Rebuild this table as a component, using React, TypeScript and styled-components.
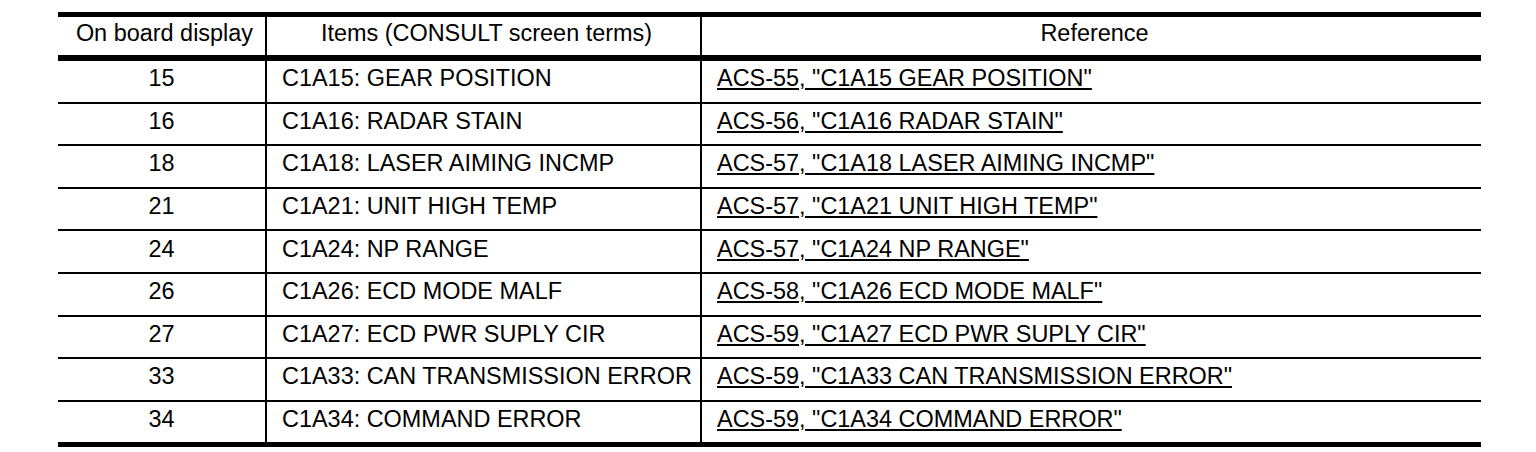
import React from 'react';
import styled, { createGlobalStyle } from 'styled-components';

const rows = [
  { code: '15', item: 'C1A15: GEAR POSITION', ref: 'ACS-55, "C1A15 GEAR POSITION"' },
  { code: '16', item: 'C1A16: RADAR STAIN', ref: 'ACS-56, "C1A16 RADAR STAIN"' },
  { code: '18', item: 'C1A18: LASER AIMING INCMP', ref: 'ACS-57, "C1A18 LASER AIMING INCMP"' },
  { code: '21', item: 'C1A21: UNIT HIGH TEMP', ref: 'ACS-57, "C1A21 UNIT HIGH TEMP"' },
  { code: '24', item: 'C1A24: NP RANGE', ref: 'ACS-57, "C1A24 NP RANGE"' },
  { code: '26', item: 'C1A26: ECD MODE MALF', ref: 'ACS-58, "C1A26 ECD MODE MALF"' },
  { code: '27', item: 'C1A27: ECD PWR SUPLY CIR', ref: 'ACS-59, "C1A27 ECD PWR SUPLY CIR"' },
  { code: '33', item: 'C1A33: CAN TRANSMISSION ERROR', ref: 'ACS-59, "C1A33 CAN TRANSMISSION ERROR"' },
  { code: '34', item: 'C1A34: COMMAND ERROR', ref: 'ACS-59, "C1A34 COMMAND ERROR"' },
];

const GlobalStyle = createGlobalStyle`
  html, body {
    margin: 0;
    padding: 0;
    background: #fff;
  }
  body {
    font-family: "Liberation Sans", Arial, sans-serif;
    color: #000;
  }
`;

export default function App() {
  return (
    <>
      <GlobalStyle />
      <Table>
        <HeaderRow>
          <Cell $align="center" $head>On board display</Cell>
          <Cell $align="center" $head>Items (CONSULT screen terms)</Cell>
          <Cell $align="center" $head>Reference</Cell>
        </HeaderRow>
        {rows.map((r) => (
          <Row key={r.code}>
            <Cell $align="center">{r.code}</Cell>
            <Cell>{r.item}</Cell>
            <Cell>
              <RefLink>{r.ref}</RefLink>
            </Cell>
          </Row>
        ))}
      </Table>
    </>
  );
}

const Table = styled.div`
  width: 1423px;
  margin: 12px 0 0 58px;
  border-top: 5px solid #000;
  border-bottom: 5px solid #000;
  font-size: 23.45px;
`;

const Row = styled.div`
  display: grid;
  grid-template-columns: 209px 435px 1fr;
  height: 40.6px;

  & + & {
    border-top: 2px solid #000;
  }
`;

const HeaderRow = styled(Row)`
  height: 38px;
  border-bottom: 4px solid #000;
`;

const Cell = styled.div<{ $align?: 'center' | 'left'; $head?: boolean }>`
  display: flex;
  align-items: center;
  justify-content: ${(p) => (p.$align === 'center' ? 'center' : 'flex-start')};
  box-sizing: border-box;
  padding: 0 0 5px ${(p) => (p.$align === 'center' ? (p.$head ? '6px' : '0') : '15px')};
  white-space: nowrap;

  &:not(:last-child) {
    border-right: 2px solid #000;
  }
`;

const RefLink = styled.span`
  text-decoration: underline;
  text-decoration-thickness: 1.5px;
  text-underline-offset: 2px;
`;
